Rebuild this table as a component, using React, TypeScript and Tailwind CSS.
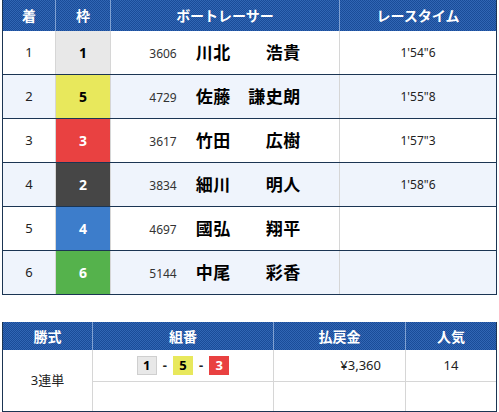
import React from 'react';

// 表ヘッダーの網掛け
const headSty =
  "bg-[repeating-conic-gradient(#3166b4_0%_25%,#1a4c98_0%_50%)] bg-[length:2px_2px] text-white font-bold text-[14px] flex items-center justify-center";

const font = { fontFamily: '"Noto Sans", "Noto Sans CJK JP", sans-serif' };

const results = [
  { rank: 1, frame: 1, reg: "3606", name: "川北　　浩貴", time: "1'54\"6" },
  { rank: 2, frame: 5, reg: "4729", name: "佐藤　謙史朗", time: "1'55\"8" },
  { rank: 3, frame: 3, reg: "3617", name: "竹田　　広樹", time: "1'57\"3" },
  { rank: 4, frame: 2, reg: "3834", name: "細川　　明人", time: "1'58\"6" },
  { rank: 5, frame: 4, reg: "4697", name: "國弘　　翔平", time: "" },
  { rank: 6, frame: 6, reg: "5144", name: "中尾　　彩香", time: "" },
];

// 枠番の色
const frameColor: Record<number, string> = {
  1: "bg-[#e8e8e8] text-black",
  2: "bg-[#464646] text-white",
  3: "bg-[#e94141] text-white",
  4: "bg-[#3d7dcb] text-white",
  5: "bg-[#e8e85c] text-black",
  6: "bg-[#55b24c] text-white",
};

const Box = ({ n }: { n: number }) => (
  <span
    className={`flex h-[19px] w-[20px] items-center justify-center text-[13px] font-bold ${frameColor[n]} ${n === 1 ? 'border border-[#cfcfcf]' : ''}`}
  >
    {n}
  </span>
);

export default function App() {
  return (
    <div className="h-[412px] w-[499px] bg-white text-[#222]" style={font}>
      {/* 着順 */}
      <div className="ml-[2px] w-[495px] border-x border-[#1b3553]">
        <div className="grid h-[31px] grid-cols-[52px_55px_229px_157px]">
          <div className={headSty}>着</div>
          <div className={`${headSty} border-l border-[#7fa0d2]`}>枠</div>
          <div className={`${headSty} border-l border-[#7fa0d2]`}>ボートレーサー</div>
          <div className={`${headSty} border-l border-[#7fa0d2]`}>レースタイム</div>
        </div>
        {results.map((r, i) => (
          <div
            key={r.rank}
            className={`grid h-[44px] grid-cols-[52px_55px_229px_157px] border-b border-[#1b3553] ${i % 2 === 1 ? 'bg-[#eff4fc]' : 'bg-white'}`}
          >
            <div className="flex items-center justify-center text-[13px]">{r.rank}</div>
            <div className={`flex items-center justify-center border-l border-[#d6d6d6] text-[14px] font-bold ${frameColor[r.frame]}`}>
              {r.frame}
            </div>
            <div className="flex items-center justify-center gap-[19px] border-l border-[#d6d6d6]">
              <span className="mt-[3px] text-[12px] text-[#333]">{r.reg}</span>
              <span className="text-[17px] font-bold tracking-[0.5px] text-black">{r.name}</span>
            </div>
            <div className="flex items-center justify-center border-l border-[#d6d6d6] text-[12px]">{r.time}</div>
          </div>
        ))}
      </div>

      {/* 払戻金 */}
      <div className="ml-[2px] mt-[27px] w-[495px] border-x border-b border-[#1b3553]">
        <div className="grid h-[28px] grid-cols-[89px_181px_132px_91px]">
          <div className={headSty}>勝式</div>
          <div className={`${headSty} border-l border-[#7fa0d2]`}>組番</div>
          <div className={`${headSty} border-l border-[#7fa0d2]`}>払戻金</div>
          <div className={`${headSty} border-l border-[#7fa0d2]`}>人気</div>
        </div>
        <div className="grid grid-cols-[89px_181px_132px_91px] grid-rows-[32px_29px]">
          <div className="row-span-2 flex items-center justify-center text-[13px]">3連単</div>
          <div className="flex items-center justify-center gap-[6px] border-b border-l border-[#d6d6d6]">
            <Box n={1} />
            <span className="text-[13px] font-bold">-</span>
            <Box n={5} />
            <span className="text-[13px] font-bold">-</span>
            <Box n={3} />
          </div>
          <div className="flex items-center justify-end border-b border-l border-[#d6d6d6] pr-[24px] text-[13px]">¥3,360</div>
          <div className="flex items-center justify-center border-b border-l border-[#d6d6d6] text-[13px]">14</div>
          <div className="border-l border-[#d6d6d6]"></div>
          <div className="border-l border-[#d6d6d6]"></div>
          <div className="border-l border-[#d6d6d6]"></div>
        </div>
      </div>
    </div>
  );
}
